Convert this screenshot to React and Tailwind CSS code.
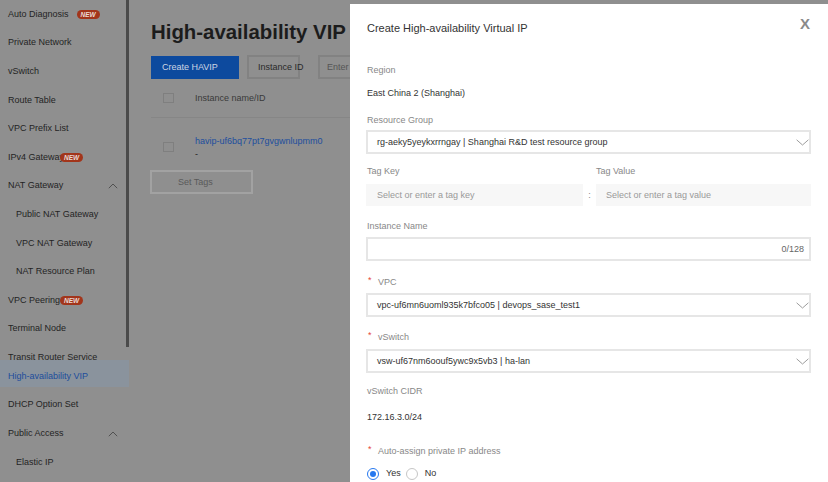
import React from "react";

const Badge = ({ className = "" }) => (
  <span
    className={
      "relative inline-flex items-center justify-center h-[9px] px-[4px] rounded-full bg-[#a2351b] text-[#eadbd6] text-[6.5px] leading-[9px] font-bold italic " +
      className
    }
  >
    NEW
  </span>
);

const ChevronUp = () => (
  <svg width="10" height="6" viewBox="0 0 10 6" className="absolute left-[108px]">
    <path d="M0.8 5.2 L5 1 L9.2 5.2" stroke="#4a4a4a" strokeWidth="0.9" fill="none" />
  </svg>
);

const ChevronDown = () => (
  <svg width="13" height="7" viewBox="0 0 13 7">
    <path d="M0.6 0.8 L6.5 6 L12.4 0.8" stroke="#9c9c9c" strokeWidth="1" fill="none" />
  </svg>
);

const Row = ({ children, sub, h = "h-[28.6px]" }) => (
  <div className={`${h} relative flex items-center whitespace-nowrap ${sub ? "pl-[16px]" : "pl-[8px]"}`}>
    {children}
  </div>
);

const Select = ({ value }) => (
  <div className="h-[24px] border-2 border-[#e6e6e6] flex items-center justify-between pl-[9px] pr-0 text-[#333]">
    <span>{value}</span>
    <ChevronDown />
  </div>
);

const Label = ({ children, required }) => (
  <div className="flex items-start text-[#888]">
    {required && <span className="w-[12px] pl-[2px] text-[#e6453b] -mt-[2px]">*</span>}
    <span>{children}</span>
  </div>
);

export default function App() {
  return (
    <div className="relative w-[828px] h-[482px] overflow-hidden bg-[#8f8f8f] flex font-['Liberation_Sans',Arial,sans-serif]">
      {/* Sidebar */}
      <aside className="relative w-[129px] shrink-0 h-full text-[9px] leading-[11px] text-[#242424]">
        <Row>
          Auto Diagnosis
          <Badge className="ml-[8px]" />
        </Row>
        <Row>Private Network</Row>
        <Row>vSwitch</Row>
        <Row>Route Table</Row>
        <Row>VPC Prefix List</Row>
        <Row>
          IPv4 Gateway
          <Badge className="-ml-[4px]" />
        </Row>
        <Row>
          NAT Gateway
          <ChevronUp />
        </Row>
        <Row sub>Public NAT Gateway</Row>
        <Row sub>VPC NAT Gateway</Row>
        <Row sub>NAT Resource Plan</Row>
        <Row>
          VPC Peering
          <Badge />
        </Row>
        <Row>Terminal Node</Row>
        <div className="h-[16.8px] overflow-hidden pl-[8px] pt-[8.8px] whitespace-nowrap">Transit Router Service</div>
        <div className="h-[27px] bg-[#8a939d] pl-[8px] pt-[11px] text-[#1d4d9c] whitespace-nowrap">
          High-availability VIP
        </div>
        <div className="mt-[3px]">
          <Row h="h-[29.2px]">DHCP Option Set</Row>
          <Row h="h-[29.2px]">
            Public Access
            <ChevronUp />
          </Row>
          <Row h="h-[29.2px]" sub>
            Elastic IP
          </Row>
        </div>
        <div className="absolute top-0 right-0 w-[3px] h-[347px] bg-[#4b4b4b]" />
      </aside>

      {/* Main content */}
      <main className="flex-1 min-w-0 pl-[22px] pt-[20.4px] text-[9px] leading-[11px] text-[#303030]">
        <h1 className="text-[20.4px] leading-[24px] font-bold text-[#1c1c1c] whitespace-nowrap">High-availability VIP</h1>
        <div className="mt-[11.6px] flex items-center h-[23px]">
          <div className="h-[23px] w-[88px] bg-[#0d4a9e] text-[#cdd5e2] flex items-center pl-[11px]">Create HAVIP</div>
          <div className="ml-[8px] h-[24px] w-[53px] border-2 border-[#828282] flex items-center pl-[9px] whitespace-nowrap text-[#2a2a2a]">
            Instance ID
          </div>
          <div className="ml-[18px] h-[24px] w-[200px] border-2 border-[#828282] flex items-center pl-[7px] text-[#555]">
            Enter
          </div>
        </div>
        <div className="mt-[1px] h-[38px] flex items-center pl-[12px] border-b border-[#868686]">
          <div className="w-[11px] h-[10px] border-[1.5px] border-[#7f7f7f]" />
          <span className="ml-[21px] text-[#3a3a3a]">Instance name/ID</span>
        </div>
        <div className="flex items-center pl-[12px] pt-[17px]">
          <div className="w-[11px] h-[10px] border-[1.5px] border-[#7f7f7f] -mt-[1px]" />
          <div className="ml-[21px] leading-[13px]">
            <div className="text-[#1d4e9e]">havip-uf6bq77pt7gvgwnlupmm0</div>
            <div className="text-[#222]">-</div>
          </div>
        </div>
        <div className="mt-[9.5px] -ml-[1px] h-[24px] w-[103px] border-2 border-[#a2a2a2] flex items-center pl-[26px] text-[#5a5a5a]">
          Set Tags
        </div>
      </main>

      {/* Drawer */}
      <div className="absolute left-[350px] top-[4px] w-[478px] h-[478px] bg-white pl-[16px] pr-[17px] pt-[17.3px] text-[9px] leading-[11px] text-[#333]">
        <div className="flex justify-between items-start">
          <div className="text-[11px] leading-[14px] text-[#333] pl-[1px]">Create High-availability Virtual IP</div>
          <div className="text-[15px] leading-[14px] font-bold text-[#8a8a8a] -mt-[4.6px] mr-[1px]">X</div>
        </div>

        <div className="mt-[29.5px] pl-[1px]">
          <Label>Region</Label>
        </div>
        <div className="mt-[12px] pl-[1px] text-[#333]">East China 2 (Shanghai)</div>

        <div className="mt-[16.5px] pl-[1px]">
          <Label>Resource Group</Label>
        </div>
        <div className="mt-[4px]">
          <Select value="rg-aeky5yeykxrrngay | Shanghai R&D test resource group" />
        </div>

        <div className="mt-[12px] flex">
          <div className="flex-1 pl-[1px]">
            <Label>Tag Key</Label>
          </div>
          <div className="w-[13px]" />
          <div className="w-[215px]">
            <Label>Tag Value</Label>
          </div>
        </div>
        <div className="mt-[7px] flex items-center">
          <div className="flex-1 h-[22px] bg-[#f7f7f7] flex items-center pl-[11px] text-[#999]">
            Select or enter a tag key
          </div>
          <div className="w-[13px] text-center text-[#888]">:</div>
          <div className="w-[215px] h-[22px] bg-[#f7f7f7] flex items-center pl-[10px] text-[#999]">
            Select or enter a tag value
          </div>
        </div>

        <div className="mt-[14.5px] pl-[1px]">
          <Label>Instance Name</Label>
        </div>
        <div className="mt-[5.5px] h-[24px] border-2 border-[#e6e6e6] flex items-center justify-end pr-[5px] text-[#666]">
          0/128
        </div>

        <div className="mt-[15.5px]">
          <Label required>VPC</Label>
        </div>
        <div className="mt-[5.5px]">
          <Select value="vpc-uf6mn6uoml935k7bfco05 | devops_sase_test1" />
        </div>

        <div className="mt-[14.5px]">
          <Label required>vSwitch</Label>
        </div>
        <div className="mt-[6.5px]">
          <Select value="vsw-uf67nm6oouf5ywc9x5vb3 | ha-lan" />
        </div>

        <div className="mt-[13px] pl-[1px]">
          <Label>vSwitch CIDR</Label>
        </div>
        <div className="mt-[14.7px] pl-[1px] text-[#333]">172.16.3.0/24</div>

        <div className="mt-[22.8px]">
          <Label required>Auto-assign private IP address</Label>
        </div>
        <div className="mt-[11px] h-[12px] flex items-center pl-[1px]">
          <div className="w-[12px] h-[12px] rounded-full border border-[#2678ef] flex items-center justify-center">
            <div className="w-[6px] h-[6px] rounded-full bg-[#2678ef]" />
          </div>
          <span className="ml-[7px] text-[#333]">Yes</span>
          <div className="ml-[5px] w-[12px] h-[12px] rounded-full border border-[#c6c6c6]" />
          <span className="ml-[7px] text-[#333]">No</span>
        </div>
      </div>
    </div>
  );
}
